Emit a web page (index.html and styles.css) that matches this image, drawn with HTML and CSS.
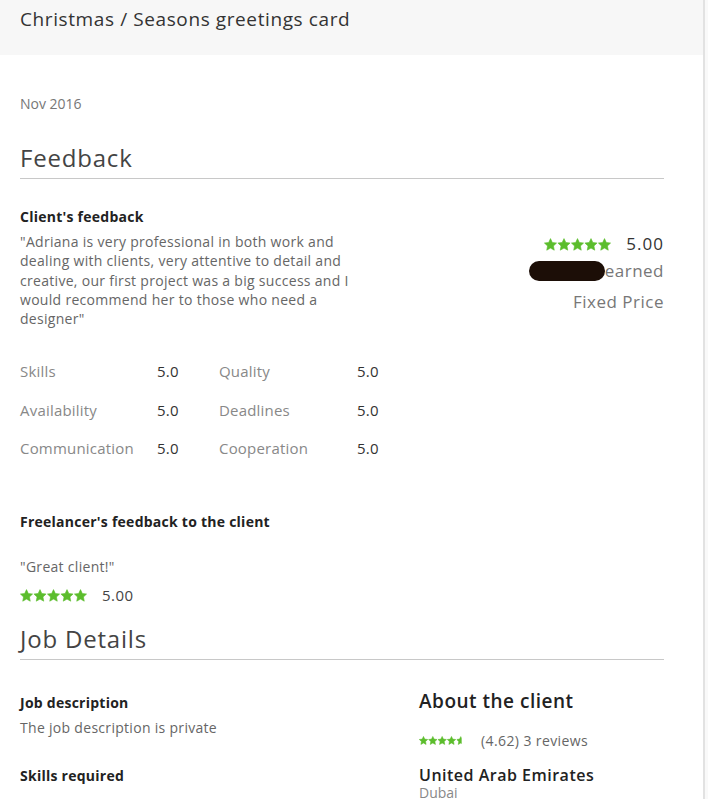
FILE: index.html
```html
<!DOCTYPE html>
<html>
<head>
<meta charset="utf-8">
<link rel="stylesheet" href="styles.css">
</head>
<body>
<svg class="defs" width="0" height="0">
  <defs>
    <polygon id="star" points="6,0.1 7.82,3.99 12.09,4.52 8.95,7.46 9.76,11.68 6,9.6 2.24,11.68 3.05,7.46 -0.09,4.52 4.18,3.99" stroke-linejoin="round"/>
    <clipPath id="half"><rect x="0" y="0" width="7.2" height="13"/></clipPath>
  </defs>
</svg>
<div class="page">
  <header class="top">
    <h1 class="title">Christmas / Seasons greetings card</h1>
  </header>
  <main class="main">
    <div class="date">Nov 2016</div>
    <h2 class="section-title">Feedback</h2>

    <div class="client-fb">
      <div class="fb-left">
        <h3 class="label-bold">Client's feedback</h3>
        <p class="quote">"Adriana is very professional in both work and dealing with clients, very attentive to detail and creative, our first project was a big success and I would recommend her to those who need a designer"</p>
      </div>
      <div class="fb-right">
        <div class="score-row">
          <svg class="stars" width="68" height="13" viewBox="-0.5 -0.5 68 13"><g fill="#5cbd2d" stroke="#5cbd2d" stroke-width="0.6">
            <use href="#star" x="0"/><use href="#star" x="13.5"/><use href="#star" x="27"/><use href="#star" x="40.5"/><use href="#star" x="54"/>
          </g></svg>
          <span class="score">5.00</span>
        </div>
        <div class="earned-row"><span class="redact"></span>earned</div>
        <div class="price-row">Fixed Price</div>
      </div>
    </div>

    <div class="ratings">
      <span class="r-label">Skills</span><span class="r-val">5.0</span>
      <span class="r-label">Quality</span><span class="r-val">5.0</span>
      <span class="r-label">Availability</span><span class="r-val">5.0</span>
      <span class="r-label">Deadlines</span><span class="r-val">5.0</span>
      <span class="r-label">Communication</span><span class="r-val">5.0</span>
      <span class="r-label">Cooperation</span><span class="r-val">5.0</span>
    </div>

    <h3 class="label-bold fl-title">Freelancer's feedback to the client</h3>
    <p class="quote great">"Great client!"</p>
    <div class="fl-score">
      <svg class="stars" width="68" height="13" viewBox="-0.5 -0.5 68 13"><g fill="#5cbd2d" stroke="#5cbd2d" stroke-width="0.6">
        <use href="#star" x="0"/><use href="#star" x="13.5"/><use href="#star" x="27"/><use href="#star" x="40.5"/><use href="#star" x="54"/>
      </g></svg>
      <span class="fl-num">5.00</span>
    </div>

    <h2 class="section-title jd-title">Job Details</h2>
    <div class="jd">
      <div class="jd-left">
        <h3 class="label-bold">Job description</h3>
        <p class="quote jd-text">The job description is private</p>
        <h3 class="label-bold skills">Skills required</h3>
      </div>
      <div class="jd-right">
        <h3 class="about">About the client</h3>
        <div class="reviews">
          <svg class="stars" width="47" height="9" viewBox="-0.5 -0.5 68 13"><g fill="#5cbd2d" stroke="#5cbd2d" stroke-width="0.8">
            <use href="#star" x="0"/><use href="#star" x="13.5"/><use href="#star" x="27"/><use href="#star" x="40.5"/>
            <g transform="translate(54 0)"><use href="#star" clip-path="url(#half)"/></g>
          </g></svg>
          <span class="rev-text">(4.62) 3 reviews</span>
        </div>
        <div class="country">United Arab Emirates</div>
        <div class="city">Dubai</div>
      </div>
    </div>
  </main>
</div>
</body>
</html>
```
FILE: styles.css
```css
* { box-sizing: border-box; }
html, body { margin: 0; padding: 0; background: #f9f9f9; }
body { font-family: "Open Sans", "Noto Sans", sans-serif; color: #333; }

.defs { position: absolute; width: 0; height: 0; }

.page {
  width: 705px;
  height: 799px;
  overflow: hidden;
  background: #fff;
  border-right: 2px solid #e2e2e2;
}

.top {
  height: 55px;
  background: #f7f7f7;
  padding: 9px 20px 0;
}
.title {
  margin: 0;
  font-size: 19px;
  line-height: 20px;
  font-weight: 400;
  letter-spacing: 0.6px;
  color: #333;
}

.main { padding: 0 39px 0 20px; }

.date {
  margin-top: 41px;
  font-size: 14px;
  line-height: 16px;
  color: #777;
}

.section-title {
  margin: 33px 0 0;
  font-size: 24px;
  line-height: 26px;
  font-weight: 400;
  letter-spacing: 0.8px;
  color: #444;
  padding-bottom: 7px;
  border-bottom: 1px solid #c8c8c8;
}

.label-bold {
  margin: 0;
  font-size: 14px;
  line-height: 18px;
  font-weight: 700;
  letter-spacing: 0.25px;
  color: #222;
}

.client-fb {
  margin-top: 29px;
  display: flex;
  justify-content: space-between;
}
.fb-left { width: 345px; }
.quote {
  margin: 6px 0 0;
  font-size: 14px;
  line-height: 19.25px;
  letter-spacing: 0.3px;
  color: #666;
}
.fb-right {
  padding-top: 26px;
  text-align: right;
  font-size: 17px;
  letter-spacing: 0.5px;
  color: #777;
}
.score-row {
  display: flex;
  align-items: center;
  justify-content: flex-end;
  gap: 14px;
  height: 20px;
}
.stars { display: block; }
.score { color: #333; font-size: 17px; line-height: 20px; letter-spacing: 1px; }
.earned-row {
  margin-top: 6px;
  line-height: 22px;
  display: flex;
  align-items: center;
  justify-content: flex-end;
}
.redact {
  display: inline-block;
  width: 76px;
  height: 20px;
  border-radius: 10px;
  background: #1c0e07;
}
.price-row { margin-top: 9px; line-height: 22px; }

.ratings {
  margin-top: 33px;
  display: grid;
  grid-template-columns: 137px 62px 138px 40px;
  row-gap: 18.5px;
  font-size: 15px;
  letter-spacing: 0.2px;
  line-height: 20px;
}
.r-label { color: #888; }
.r-val { color: #333; }

.fl-title { margin-top: 55px; }
.great { margin-top: 27px; line-height: 18px; }
.fl-score {
  margin-top: 9px;
  height: 20px;
  display: flex;
  align-items: center;
  gap: 14px;
}
.fl-num { font-size: 15px; letter-spacing: 0.5px; color: #444; }

.jd-title { margin-top: 21px; }

.jd {
  margin-top: 29px;
  display: flex;
}
.jd-left { width: 399px; padding-top: 5px; }
.jd-text { margin-top: 7px; line-height: 18px; }
.skills { margin-top: 30px; }
.jd-right { flex: 1; }
.about {
  margin: 0;
  font-size: 19px;
  line-height: 24px;
  font-weight: 600;
  letter-spacing: 0.5px;
  color: #222;
}
.reviews {
  margin-top: 18px;
  height: 18px;
  display: flex;
  align-items: center;
  gap: 15px;
}
.rev-text { font-size: 14px; letter-spacing: 0.4px; color: #666; }
.country {
  margin-top: 17px;
  font-size: 16px;
  line-height: 19px;
  font-weight: 600;
  letter-spacing: 0.5px;
  color: #222;
}
.city {
  font-size: 14px;
  line-height: 16px;
  color: #888;
}
```
